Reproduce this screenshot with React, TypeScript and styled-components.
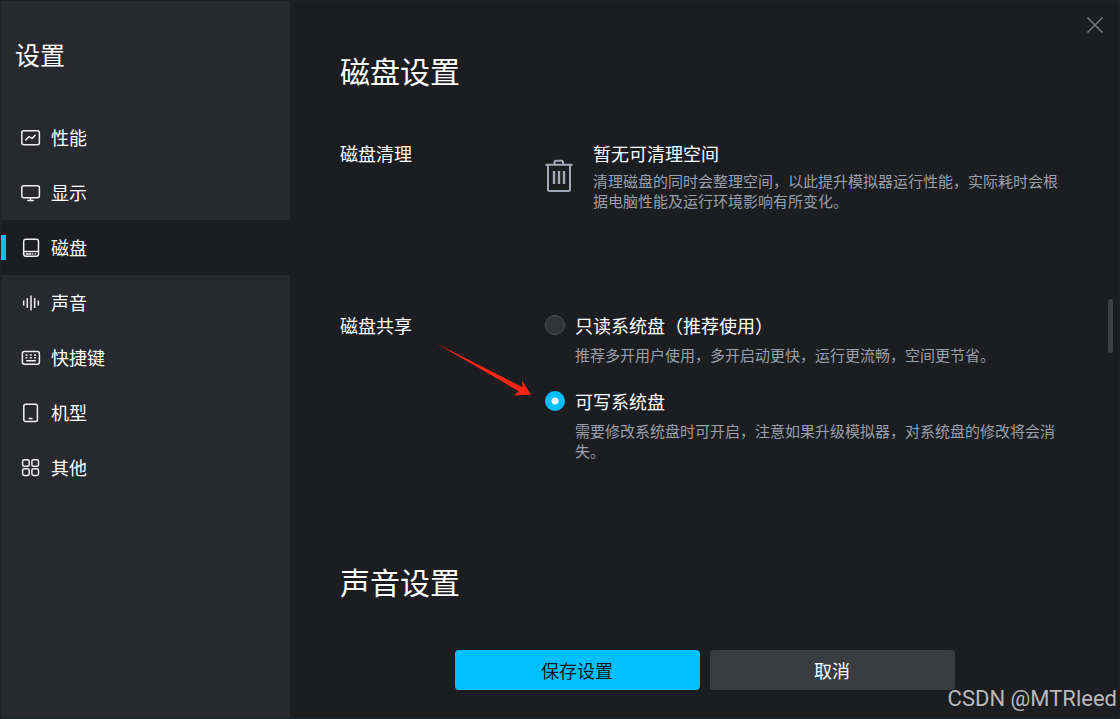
import React, { useState } from "react";
import styled, { createGlobalStyle } from "styled-components";

const GlobalStyle = createGlobalStyle`
  * { box-sizing: border-box; }
  body {
    margin: 0;
    background: #1c1d20;
    color: #fff;
    font-family: "Noto Sans CJK SC", sans-serif;
    font-size: 18px;
    line-height: 24px;
  }
`;

const Window = styled.div`
  position: relative;
  display: flex;
  min-height: 100vh;
  background: #1c1d20;
  border: 1px solid #1b222a;
`;

const Sidebar = styled.aside`
  flex: 0 0 289px;
  background: #28292e;
`;

const SidebarTitle = styled.h1`
  margin: 0;
  padding: 33px 14px 36px;
  font-size: 25px;
  line-height: 40px;
  font-weight: 400;
`;

const Nav = styled.nav`
  display: flex;
  flex-direction: column;
`;

const NavItem = styled.button<{ $active: boolean }>`
  position: relative;
  display: flex;
  align-items: center;
  gap: 10px;
  height: 55px;
  padding: 0 20px;
  border: 0;
  background: ${(p) => (p.$active ? "#1c1d20" : "transparent")};
  color: #fff;
  font: inherit;
  text-align: left;
  cursor: pointer;

  &::before {
    content: "";
    display: ${(p) => (p.$active ? "block" : "none")};
    position: absolute;
    left: 0;
    top: 15px;
    width: 5px;
    height: 25px;
    background: #00bfff;
  }
`;

const NavIcon = styled.svg`
  width: 20px;
  height: 20px;
  fill: none;
  stroke: #f0f0f1;
  stroke-width: 1.5;
  stroke-linecap: round;
  stroke-linejoin: round;
`;

const NavLabel = styled.span`
  padding-bottom: 2px;
`;

const Main = styled.main`
  flex: 1;
  min-width: 0;
  display: flex;
  flex-direction: column;
`;

const Content = styled.div`
  flex: 1;
  display: flex;
  flex-direction: column;
  gap: 100px;
  padding: 49px 59px 32px 50px;
`;

const Section = styled.section`
  display: flex;
  flex-direction: column;
  gap: 51px;
`;

const SectionTitle = styled.h2`
  margin: 0;
  font-size: 30px;
  line-height: 40px;
  font-weight: 400;
`;

const SettingList = styled.div`
  display: flex;
  flex-direction: column;
  gap: 102px;
`;

const SettingRow = styled.div`
  display: grid;
  grid-template-columns: 205px minmax(0, 1fr);
`;

const SettingLabel = styled.h3`
  margin: 0;
  font-size: 18px;
  line-height: 24px;
  font-weight: 400;
`;

const Cleanup = styled.div`
  display: flex;
  align-items: flex-start;
  gap: 20px;
`;

const TrashIcon = styled.svg`
  flex: none;
  width: 28px;
  height: 34px;
  margin-top: 18px;
  fill: none;
  stroke: #a3a9b7;
  stroke-width: 2;
  stroke-linejoin: round;
`;

const TextBlock = styled.div<{ $gap: number }>`
  display: flex;
  flex-direction: column;
  gap: ${(p) => p.$gap}px;
`;

const Description = styled.p`
  margin: 0;
  color: #9a9fab;
  font-size: 15px;
  line-height: 20px;
`;

const Options = styled.div`
  position: relative;
  display: flex;
  flex-direction: column;
  gap: 24px;
`;

const Option = styled.label`
  display: flex;
  align-items: flex-start;
  gap: 10px;
  cursor: pointer;
`;

const Radio = styled.input`
  appearance: none;
  flex: none;
  width: 20px;
  height: 20px;
  margin: 2px 0 0;
  border: 1px solid #505155;
  border-radius: 50%;
  background: #323337;

  &:checked {
    border: 0;
    background: radial-gradient(circle, #fff 0 3px, #00bfff 4px);
  }
`;

const Pointer = styled.svg`
  position: absolute;
  left: -109px;
  top: 29px;
  width: 96px;
  height: 56px;
  fill: #ff2414;
  pointer-events: none;
`;

const Footer = styled.footer`
  display: flex;
  justify-content: center;
  gap: 10px;
  padding-bottom: 28px;
`;

const ActionButton = styled.button<{ $primary?: boolean }>`
  width: 245px;
  height: 40px;
  border: 0;
  border-radius: 4px;
  background: ${(p) => (p.$primary ? "#00bfff" : "#393d41")};
  color: ${(p) => (p.$primary ? "#14181c" : "#fff")};
  font: inherit;
  cursor: pointer;
`;

const CloseButton = styled.button`
  position: absolute;
  top: 14px;
  right: 14px;
  width: 20px;
  height: 20px;
  padding: 0;
  border: 0;
  background: none;
  cursor: pointer;

  svg {
    display: block;
    fill: none;
    stroke: #75767d;
    stroke-width: 1.5;
  }
`;

const ScrollThumb = styled.div`
  position: absolute;
  top: 298px;
  right: 6px;
  width: 5px;
  height: 54px;
  border-radius: 3px;
  background: #3e3f43;
`;

const Watermark = styled.span`
  position: absolute;
  right: 2px;
  bottom: 6px;
  color: #b9babb;
  font-family: Roboto, sans-serif;
  font-size: 22px;
  line-height: 26px;
  white-space: nowrap;
`;

const navItems: { name: string; icon: React.ReactNode }[] = [
  {
    name: "性能",
    icon: (
      <>
        <rect x="0.8" y="2.7" width="17.6" height="14" rx="2" />
        <path d="M4.8 12 8 8.5l3 2L14.2 7.3" />
      </>
    ),
  },
  {
    name: "显示",
    icon: (
      <>
        <rect x="0.8" y="2.7" width="17.6" height="12" rx="2" />
        <path d="M9.5 14.7v2.6M6.8 17.4h5.4" />
      </>
    ),
  },
  {
    name: "磁盘",
    icon: (
      <>
        <rect x="2.7" y="1.2" width="14.8" height="17" rx="2.2" />
        <path d="M2.9 13.6h14.4" />
        <path d="M5.2 16h4.6M11.7 16h.2M14.2 16h.2" />
      </>
    ),
  },
  {
    name: "声音",
    icon: <path d="M2.7 7.5v5M6.300 5v10M10 2.500v15M13.700 5v10M17.300 7.500v5" strokeLinecap="butt" />,
  },
  {
    name: "快捷键",
    icon: (
      <>
        <rect x="1.4" y="3.5" width="17" height="12.8" rx="2" />
        <path d="M4.5 7h2M8.8 7h2M13 7h2M4.5 9.8h2M8.8 9.8h2M13 9.8h2M5.2 12.8h9.6" strokeLinecap="butt" />
      </>
    ),
  },
  {
    name: "机型",
    icon: (
      <>
        <rect x="2.8" y="1.2" width="13.6" height="17.4" rx="2" />
        <path d="M8.2 15.5h2.8" />
      </>
    ),
  },
  {
    name: "其他",
    icon: (
      <>
        <rect x="1.6" y="1.7" width="6.6" height="6.6" rx="1.6" />
        <rect x="10.900" y="1.7" width="6.6" height="6.6" rx="1.6" />
        <rect x="1.6" y="10.8" width="6.6" height="6.6" rx="1.6" />
        <rect x="10.900" y="10.8" width="6.6" height="6.6" rx="1.6" />
      </>
    ),
  },
];

const diskModes = [
  {
    id: "readonly",
    title: "只读系统盘（推荐使用）",
    text: "推荐多开用户使用，多开启动更快，运行更流畅，空间更节省。",
  },
  {
    id: "writable",
    title: "可写系统盘",
    text: "需要修改系统盘时可开启，注意如果升级模拟器，对系统盘的修改将会消失。",
  },
];

export default function App() {
  const [page, setPage] = useState("磁盘");
  const [mode, setMode] = useState("writable");

  return (
    <Window>
      <GlobalStyle />
      <Sidebar>
        <SidebarTitle>设置</SidebarTitle>
        <Nav>
          {navItems.map((item) => (
            <NavItem
              key={item.name}
              type="button"
              $active={item.name === page}
              onClick={() => setPage(item.name)}
            >
              <NavIcon viewBox="0 0 20 20" aria-hidden="true">{item.icon}</NavIcon>
              <NavLabel>{item.name}</NavLabel>
            </NavItem>
          ))}
        </Nav>
      </Sidebar>

      <Main>
        <Content>
          <Section>
            <SectionTitle>磁盘设置</SectionTitle>
            <SettingList>
              <SettingRow>
                <SettingLabel>磁盘清理</SettingLabel>
                <Cleanup>
                  <TrashIcon viewBox="0 0 28 34" aria-hidden="true">
                    <path d="M0.5 5.7h27M9.5 5.5V3.2Q9.5 1.7 11 1.7h5.5Q18 1.7 18 3.2V5.5" />
                    <path d="M3 6v24.5Q3 32 4.5 32h19Q25 32 25 30.5V6" />
                    <path d="M9 12v13M14 12v13M19 12v13" strokeWidth="2.4" />
                  </TrashIcon>
                  <TextBlock $gap={6}>
                    <span>暂无可清理空间</span>
                    <Description>
                      清理磁盘的同时会整理空间，以此提升模拟器运行性能，实际耗时会根据电脑性能及运行环境影响有所变化。
                    </Description>
                  </TextBlock>
                </Cleanup>
              </SettingRow>
              <SettingRow>
                <SettingLabel>磁盘共享</SettingLabel>
                <Options role="radiogroup" aria-label="磁盘共享">
                  {diskModes.map((item) => (
                    <Option key={item.id}>
                      <Radio
                        type="radio"
                        name="disk-mode"
                        checked={mode === item.id}
                        onChange={() => setMode(item.id)}
                      />
                      <TextBlock $gap={8}>
                        <span>{item.title}</span>
                        <Description>{item.text}</Description>
                      </TextBlock>
                    </Option>
                  ))}
                  <Pointer viewBox="0 0 96 56" aria-hidden="true">
                    <path d="M0.5 1.5 86.5 45.2 86 38.6 94.9 52.7 78 53.4 83 49.3Z" />
                  </Pointer>
                </Options>
              </SettingRow>
            </SettingList>
          </Section>
          <Section>
            <SectionTitle>声音设置</SectionTitle>
          </Section>
        </Content>
        <Footer>
          <ActionButton type="button" $primary>保存设置</ActionButton>
          <ActionButton type="button">取消</ActionButton>
        </Footer>
      </Main>

      <CloseButton type="button" aria-label="关闭">
        <svg width="20" height="20" viewBox="0 0 20 20">
          <path d="M2.5 2.5 17.5 17.5M17.5 2.5 2.5 17.5" />
        </svg>
      </CloseButton>
      <ScrollThumb />
      <Watermark>CSDN @MTRleed</Watermark>
    </Window>
  );
}
